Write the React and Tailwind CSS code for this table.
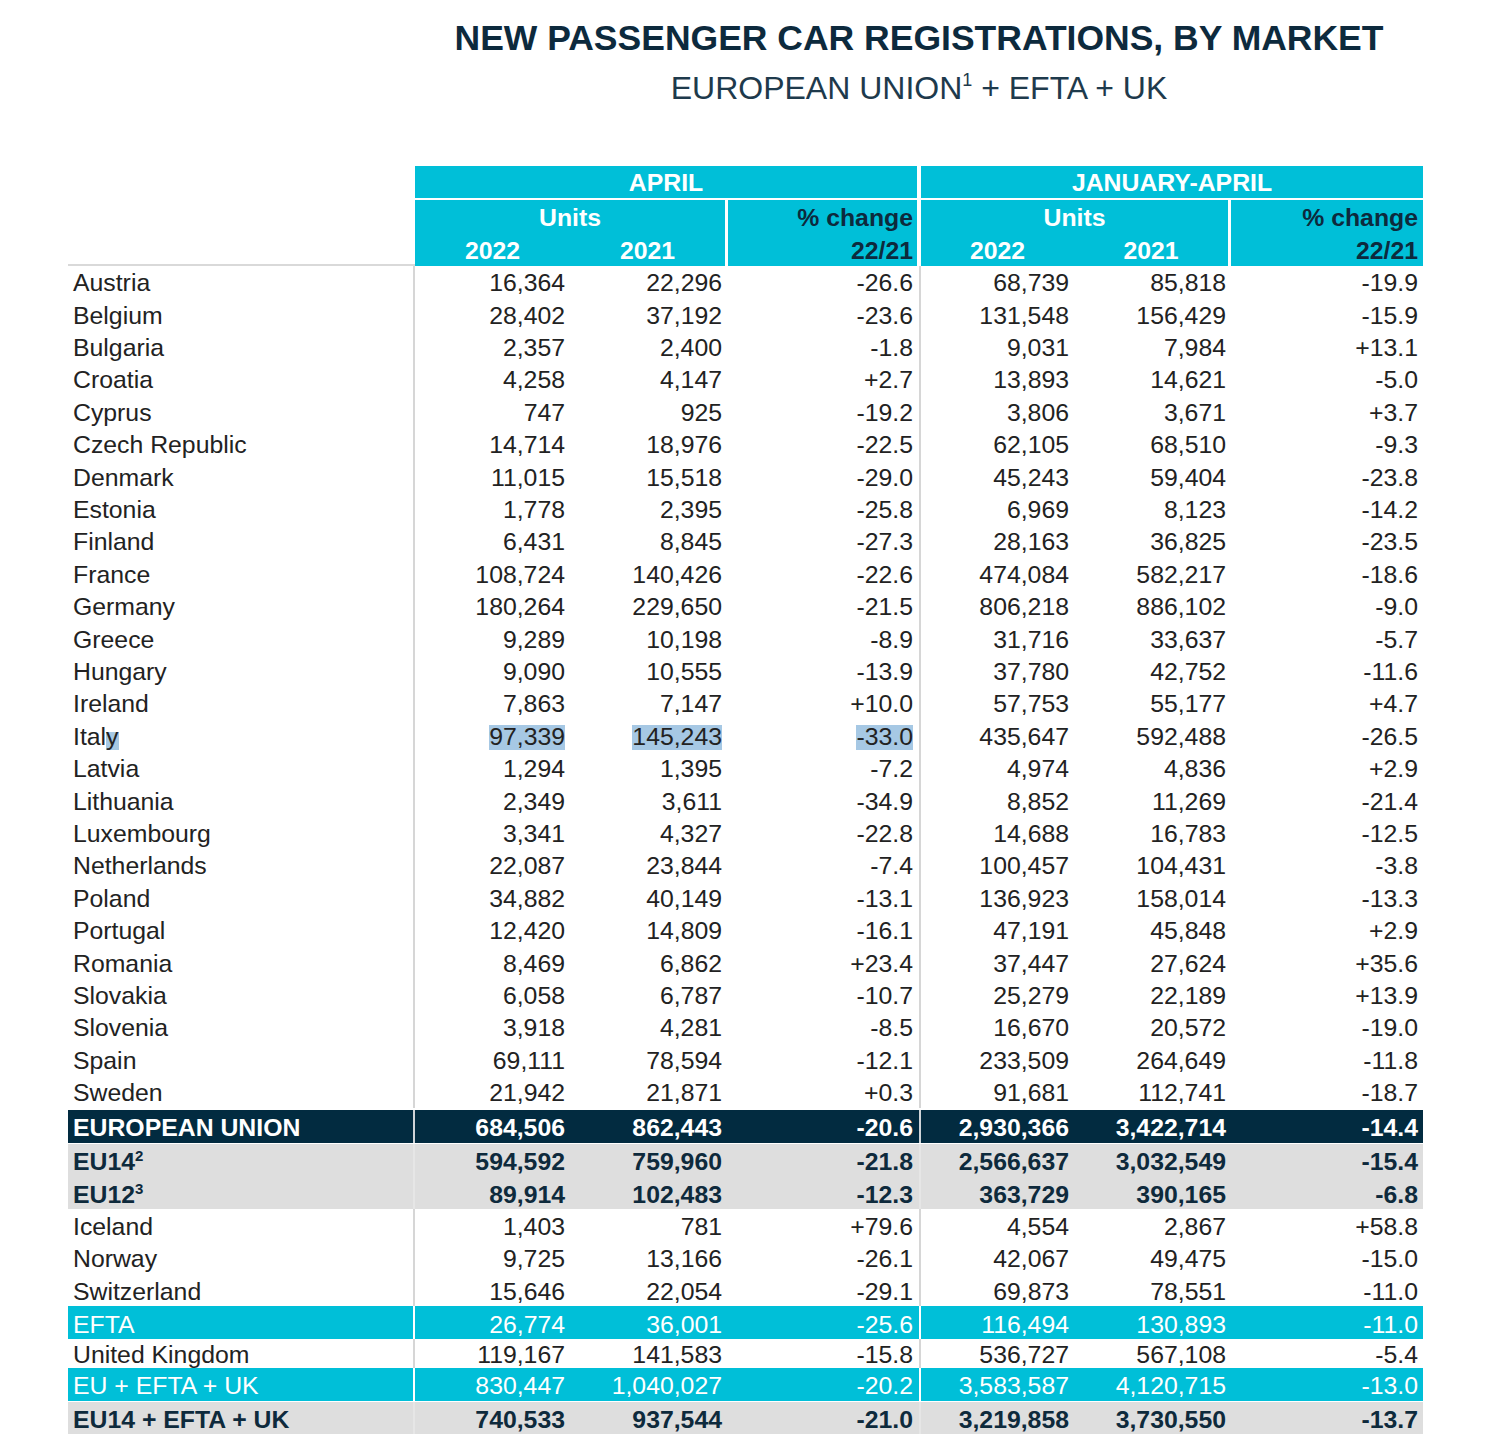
const rows = [
  ['Austria', '16,364', '22,296', '-26.6', '68,739', '85,818', '-19.9'],
  ['Belgium', '28,402', '37,192', '-23.6', '131,548', '156,429', '-15.9'],
  ['Bulgaria', '2,357', '2,400', '-1.8', '9,031', '7,984', '+13.1'],
  ['Croatia', '4,258', '4,147', '+2.7', '13,893', '14,621', '-5.0'],
  ['Cyprus', '747', '925', '-19.2', '3,806', '3,671', '+3.7'],
  ['Czech Republic', '14,714', '18,976', '-22.5', '62,105', '68,510', '-9.3'],
  ['Denmark', '11,015', '15,518', '-29.0', '45,243', '59,404', '-23.8'],
  ['Estonia', '1,778', '2,395', '-25.8', '6,969', '8,123', '-14.2'],
  ['Finland', '6,431', '8,845', '-27.3', '28,163', '36,825', '-23.5'],
  ['France', '108,724', '140,426', '-22.6', '474,084', '582,217', '-18.6'],
  ['Germany', '180,264', '229,650', '-21.5', '806,218', '886,102', '-9.0'],
  ['Greece', '9,289', '10,198', '-8.9', '31,716', '33,637', '-5.7'],
  ['Hungary', '9,090', '10,555', '-13.9', '37,780', '42,752', '-11.6'],
  ['Ireland', '7,863', '7,147', '+10.0', '57,753', '55,177', '+4.7'],
  ['Italy', '97,339', '145,243', '-33.0', '435,647', '592,488', '-26.5'],
  ['Latvia', '1,294', '1,395', '-7.2', '4,974', '4,836', '+2.9'],
  ['Lithuania', '2,349', '3,611', '-34.9', '8,852', '11,269', '-21.4'],
  ['Luxembourg', '3,341', '4,327', '-22.8', '14,688', '16,783', '-12.5'],
  ['Netherlands', '22,087', '23,844', '-7.4', '100,457', '104,431', '-3.8'],
  ['Poland', '34,882', '40,149', '-13.1', '136,923', '158,014', '-13.3'],
  ['Portugal', '12,420', '14,809', '-16.1', '47,191', '45,848', '+2.9'],
  ['Romania', '8,469', '6,862', '+23.4', '37,447', '27,624', '+35.6'],
  ['Slovakia', '6,058', '6,787', '-10.7', '25,279', '22,189', '+13.9'],
  ['Slovenia', '3,918', '4,281', '-8.5', '16,670', '20,572', '-19.0'],
  ['Spain', '69,111', '78,594', '-12.1', '233,509', '264,649', '-11.8'],
  ['Sweden', '21,942', '21,871', '+0.3', '91,681', '112,741', '-18.7'],
]

const efta = [
  ['Iceland', '1,403', '781', '+79.6', '4,554', '2,867', '+58.8'],
  ['Norway', '9,725', '13,166', '-26.1', '42,067', '49,475', '-15.0'],
  ['Switzerland', '15,646', '22,054', '-29.1', '69,873', '78,551', '-11.0'],
]

const cellW = ['w-[155px] pr-[5px]', 'w-[157px] pr-[5px]', 'w-[192px] pr-[6px]', 'w-[155px] pr-[5px] border-l-2', 'w-[157px] pr-[5px]', 'w-[192px] pr-[5px]']

function Hl({ children }) {
  return <span className="bg-[#a6c8e4]">{children}</span>
}

function Sup({ children, className = 'text-[15px] -top-[9px]' }) {
  return <sup className={`relative ${className}`}>{children}</sup>
}

function Row({ label, values, h = 'h-[32.4px]', tone = 'plain', highlight = false }) {
  const styles = {
    plain: 'text-[#222] border-[#d6d6d6]',
    navy: 'bg-[#022b40] text-white font-bold border-[#cfd4d8]',
    gray: 'bg-[#dedede] text-[#0e2a3c] font-bold border-[#e6e6e6]',
    cyan: 'bg-[#00bfd8] text-white border-white',
  }[tone]
  return (
    <div className={`flex w-[1355px] ${h} ${styles}`}>
      <div className={`w-[347px] border-r-2 pl-[5px] pt-[4px] flex items-center ${styles}`}>{label}</div>
      {values.map((v, i) => (
        <div key={i} className={`${cellW[i]} pt-[4px] flex items-center justify-end ${styles}`}>
          {highlight && i < 3 ? <Hl>{v}</Hl> : v}
        </div>
      ))}
    </div>
  )
}

export default function App() {
  return (
    <div className="w-[1500px] h-[1435px] overflow-hidden bg-white pl-[68px] font-['Liberation_Sans',Arial,sans-serif] text-[24.8px] leading-none">
      <div className="ml-[347px] w-[1008px] text-center pt-[21px]">
        <h1 className="text-[35.5px] font-bold text-[#0d2a3d] leading-none">NEW PASSENGER CAR REGISTRATIONS, BY MARKET</h1>
        <p className="mt-[15px] text-[32px] text-[#1e3a4c] leading-none">
          EUROPEAN UNION<Sup className="text-[18px] -top-[13px]">1</Sup> + EFTA + UK
        </p>
      </div>

      <div className="mt-[62px] flex">
        <div className="w-[347px] h-[100px] border-b-2 border-[#d9d9d9]" />
        <div className="flex flex-col font-bold">
          <div className="flex gap-[4px] h-[32px] text-white">
            <div className="w-[502px] bg-[#00bfd8] pt-[4px] flex items-center justify-center">APRIL</div>
            <div className="w-[502px] bg-[#00bfd8] pt-[4px] flex items-center justify-center">JANUARY-APRIL</div>
          </div>
          <div className="mt-[2px] flex h-[66px]">
            <div className="w-[310px] bg-[#00bfd8] text-white flex flex-col">
              <div className="h-[33px] pt-[4px] flex items-center justify-center">Units</div>
              <div className="h-[33px] flex">
                <div className="w-[155px] pt-[4px] flex items-center justify-center">2022</div>
                <div className="w-[155px] pt-[4px] flex items-center justify-center">2021</div>
              </div>
            </div>
            <div className="ml-[3px] w-[189px] bg-[#00bfd8] text-[#0d2a3d] flex flex-col items-end pr-[4px]">
              <div className="h-[33px] pt-[4px] flex items-center">% change</div>
              <div className="h-[33px] pt-[4px] flex items-center">22/21</div>
            </div>
            <div className="ml-[4px] w-[307px] bg-[#00bfd8] text-white flex flex-col">
              <div className="h-[33px] pt-[4px] flex items-center justify-center">Units</div>
              <div className="h-[33px] flex">
                <div className="w-[153px] pt-[4px] flex items-center justify-center">2022</div>
                <div className="w-[154px] pt-[4px] flex items-center justify-center">2021</div>
              </div>
            </div>
            <div className="ml-[3px] w-[192px] bg-[#00bfd8] text-[#0d2a3d] flex flex-col items-end pr-[5px]">
              <div className="h-[33px] pt-[4px] flex items-center">% change</div>
              <div className="h-[33px] pt-[4px] flex items-center">22/21</div>
            </div>
          </div>
        </div>
      </div>

      <div className="flex flex-col">
        {rows.map(([label, ...values]) => (
          <Row
            key={label}
            label={label === 'Italy' ? <span>Ital<span className="bg-[linear-gradient(transparent_35%,#a6c8e4_35%)]">y</span></span> : label}
            values={values}
            highlight={label === 'Italy'}
          />
        ))}
        <div className="mt-[2px]">
          <Row tone="navy" h="h-[33px]" label="EUROPEAN UNION" values={['684,506', '862,443', '-20.6', '2,930,366', '3,422,714', '-14.4']} />
        </div>
        <div className="mt-[1.6px]">
          <Row tone="gray" h="h-[32.5px]" label={<span>EU14<Sup>2</Sup></span>} values={['594,592', '759,960', '-21.8', '2,566,637', '3,032,549', '-15.4']} />
          <Row tone="gray" h="h-[32.5px]" label={<span>EU12<Sup>3</Sup></span>} values={['89,914', '102,483', '-12.3', '363,729', '390,165', '-6.8']} />
        </div>
        {efta.map(([label, ...values]) => (
          <Row key={label} label={label} values={values} />
        ))}
        <Row tone="cyan" h="h-[33px]" label="EFTA" values={['26,774', '36,001', '-25.6', '116,494', '130,893', '-11.0']} />
        <Row h="h-[28.5px]" label="United Kingdom" values={['119,167', '141,583', '-15.8', '536,727', '567,108', '-5.4']} />
        <Row tone="cyan" h="h-[33px]" label="EU + EFTA + UK" values={['830,447', '1,040,027', '-20.2', '3,583,587', '4,120,715', '-13.0']} />
        <div className="mt-[1px]">
          <Row tone="gray" h="h-[32px]" label="EU14 + EFTA + UK" values={['740,533', '937,544', '-21.0', '3,219,858', '3,730,550', '-13.7']} />
        </div>
      </div>
    </div>
  )
}
